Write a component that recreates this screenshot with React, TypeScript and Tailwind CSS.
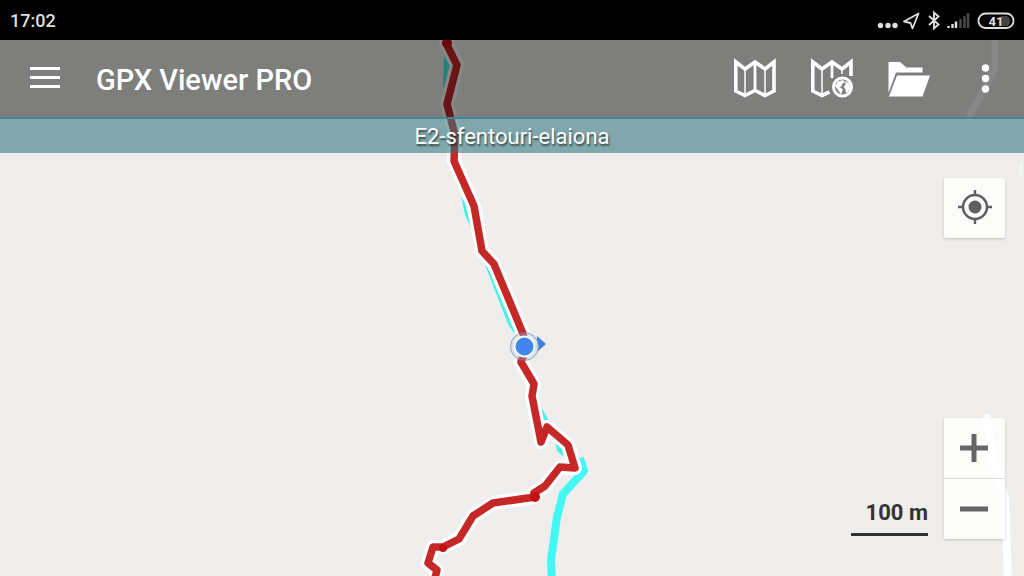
import type { ReactNode } from "react";

interface ToolbarButtonProps {
  label: string;
  children: ReactNode;
}

const TRACK_UPPER =
  "M449 36 L446 43 L457 65 L447 104 L455 135 L454 161 L474 206 L482 251 L494 264 L524 336 L521 362 L534 384 L532 396 L541 442 L547 427 L568 445 L575 468 L560 467 L545 486 L534 493";
const TRACK_LOWER =
  "M535 497 L493 503 L473 516 L459 539 L443 547 L433 547 L428 563 L437 570 L434 582";

function MapCanvas() {
  return (
    <svg
      className="absolute inset-0 h-full w-full"
      viewBox="0 0 1024 576"
      preserveAspectRatio="xMidYMid slice"
      fill="none"
      aria-hidden="true"
    >
      {/* roads */}
      <g stroke="#ffffff" strokeLinejoin="round" strokeLinecap="round">
        <path d="M995 36 V68 L969 117" strokeWidth="7" />
        <path d="M987 418 L992 455 L1005 499 L1008 580" strokeWidth="8" />
        <path d="M1021 164 V176" strokeWidth="1" />
      </g>

      {/* planned route */}
      <path
        d="M444 52 L451 66 L443 90 Z M461 196 L465 203 L471 228 L465 215 Z M484 262 L488 268 L517 331 L514 333 L508 324 Z M540 405 L549 421 L540 420 Z M555 442 L563 450 L563 456 L557 451 Z"
        fill="#43f2ec"
      />
      <path
        d="M580 458 L584 471 L563 494 L557 517 L551 560 L552 580"
        stroke="#43f7f4"
        strokeWidth="8"
        strokeLinejoin="round"
      />

      {/* recorded track */}
      <g stroke="#ffffff" strokeWidth="14" strokeLinejoin="round" strokeLinecap="round">
        <path d={TRACK_UPPER} />
        <path d={TRACK_LOWER} />
      </g>
      <g stroke="#c62828" strokeWidth="7.5" strokeLinejoin="round" strokeLinecap="round">
        <path d={TRACK_UPPER} />
        <path d={TRACK_LOWER} />
      </g>
      <g fill="#c21216">
        <circle cx="535" cy="497" r="5" />
        <circle cx="443" cy="548" r="4" />
        <circle cx="447" cy="43" r="5" />
      </g>

      {/* current position */}
      <path d="M537 336 L546 344 L537 352 Z" fill="#3f80e0" />
      <circle cx="524.5" cy="346.5" r="14" fill="#cfe0ec" fillOpacity="0.8" stroke="#8fa5b8" />
      <path
        d="M522 331 L524 337 M521 361 L524 356"
        stroke="#a83248"
        strokeOpacity="0.7"
        strokeWidth="7"
      />
      <circle cx="524.5" cy="346.5" r="10" fill="#4285ee" stroke="#f4f8fb" strokeWidth="2" />
    </svg>
  );
}

function StatusBar() {
  return (
    <div className="flex h-10 items-center justify-between bg-black pl-2.5 pr-2 pt-0.5 text-[#dedede]">
      <span className="text-lg font-medium">17:02</span>
      <svg className="h-6 w-[140px]" viewBox="0 0 140 24" fill="none" aria-hidden="true">
        <g fill="#dedede">
          <circle cx="4.5" cy="16.5" r="2.7" />
          <circle cx="12" cy="16.5" r="2.7" />
          <circle cx="19" cy="16.5" r="2.7" />
        </g>
        <path d="M42.5 4.5 L28 12.5 L34.5 14 L36.5 19.5 Z" stroke="#dedede" strokeWidth="1.8" strokeLinejoin="round" />
        <path d="M53 7 L62.5 15.5 L58 19.5 V3.5 L62.5 7.5 L53 16" stroke="#dedede" strokeWidth="1.9" />
        <path d="M72.5 19 V17 M76.5 19 V15 M80 19 V12.5" stroke="#dedede" strokeWidth="2.4" />
        <path d="M84.5 19 V10 M88.5 19 V7 M92 19 V4" stroke="#4a4a4a" strokeWidth="2.4" />
        <path d="M125 7 H131 Q134 8 134 12 Q134 16 131 17 H125 Z" fill="#444444" />
        <rect x="102.5" y="4.5" width="35" height="14.5" rx="7" stroke="#dedede" strokeWidth="1.8" />
        <text
          x="120"
          y="16.5"
          textAnchor="middle"
          fill="#dedede"
          className="font-['Roboto',sans-serif] text-[13px] font-bold"
        >
          41
        </text>
      </svg>
    </div>
  );
}

function ToolbarButton({ label, children }: ToolbarButtonProps) {
  return (
    <button type="button" aria-label={label} className="flex h-full w-[77px] items-center justify-center">
      <svg className="h-11 w-11" viewBox="0 0 44 44" fill="none" stroke="#ffffff">
        {children}
      </svg>
    </button>
  );
}

function Toolbar() {
  return (
    <header className="flex h-[77px] items-center bg-black/47 pb-0.5 text-white">
      <button type="button" aria-label="Open menu" className="ml-[30px] flex w-[30px] flex-col gap-1.5">
        <span className="h-[3px] bg-white" />
        <span className="h-[3px] bg-white" />
        <span className="h-[3px] bg-white" />
      </button>
      <h1 className="ml-9 flex-1 pt-1.5 text-[29px] font-medium">GPX Viewer PRO</h1>

      <ToolbarButton label="Select map">
        <path d="M2.8 6 L12 13 L22 6 L32 13 L41 6 V35 L32 39.5 L22 34.5 L12 39.5 L2.8 35 Z" strokeWidth="3.6" />
        <path d="M12 12 V39 M32 12 V39" strokeWidth="1.5" />
        <path d="M22 6 V35" strokeWidth="2.8" />
      </ToolbarButton>

      <ToolbarButton label="Online maps">
        <path d="M41 20 V6 L32 13 L22 6 L12 13 L2.8 6 V35 L12 39.5 L19.5 36" strokeWidth="3.6" />
        <path d="M12 12 V39 M32 12 V18" strokeWidth="1.5" />
        <path d="M22 6 V22" strokeWidth="2.8" />
        <circle cx="32.5" cy="31" r="9" strokeWidth="3" />
        <path
          d="M25 30 L28 25.5 L33 24 L35 26 L31.5 28.5 L32 30 L29.5 31 L33 33.5 L31 38.5 L28.5 34.5 Z M35.5 25 L39.5 28 L40 33 L37 37 L35.5 36 L35.5 33 L33.5 31 L35.5 28.5 Z"
          fill="#ffffff"
          stroke="none"
        />
      </ToolbarButton>

      <ToolbarButton label="Open file">
        <path d="M1.5 6 H13 L19.5 11.5 H35.5 V16.5 H9 L1.5 37 Z" fill="#ffffff" stroke="none" />
        <path d="M10 19.5 H43 L35.5 40.5 H2 Z" fill="#ffffff" stroke="none" />
      </ToolbarButton>

      <ToolbarButton label="More options">
        <g fill="#ffffff" stroke="none">
          <circle cx="21.5" cy="12" r="3.7" />
          <circle cx="21.5" cy="22.5" r="3.7" />
          <circle cx="21.5" cy="33" r="3.7" />
        </g>
      </ToolbarButton>
    </header>
  );
}

function ZoomControls() {
  return (
    <div className="flex w-[61px] flex-col divide-y divide-[#dadad8] rounded-xs bg-white/80 shadow-[0_1px_3px_rgba(0,0,0,0.2)]">
      <button type="button" aria-label="Zoom in" className="flex h-[61px] items-center justify-center pr-0.5">
        <svg className="h-7 w-7" viewBox="0 0 28 28" stroke="#666666" strokeWidth="5">
          <path d="M0 14 H28 M14 0 V28" />
        </svg>
      </button>
      <button type="button" aria-label="Zoom out" className="flex h-[60px] items-center justify-center pr-0.5">
        <svg className="h-7 w-7" viewBox="0 0 28 28" stroke="#666666" strokeWidth="5">
          <path d="M0 14 H28" />
        </svg>
      </button>
    </div>
  );
}

export default function App() {
  return (
    <div className="relative flex min-h-screen flex-col overflow-hidden bg-[#efeeec] font-['Roboto',sans-serif]">
      <MapCanvas />

      <div className="relative flex flex-1 flex-col">
        <StatusBar />
        <Toolbar />
        <h2 className="h-9 border-t-2 border-[#3f8699] bg-[#257078]/55 text-center text-[22px] leading-9 text-white text-shadow-[1px_2px_2px_rgba(0,0,0,0.6)]">
          E2-sfentouri-elaiona
        </h2>

        <main className="flex flex-1 flex-col items-end justify-between pb-[37px] pr-[19px] pt-[25px]">
          <button
            type="button"
            aria-label="Show my location"
            className="flex h-[60px] w-[61px] items-center justify-center rounded-xs bg-white/80 pb-0.5 shadow-[0_1px_3px_rgba(0,0,0,0.2)]"
          >
            <svg className="h-[34px] w-[34px]" viewBox="0 0 34 34" fill="none" stroke="#5f5f5f">
              <circle cx="17" cy="17" r="12" strokeWidth="2.5" />
              <circle cx="17" cy="17" r="6.5" fill="#5f5f5f" stroke="none" />
              <path d="M17 0 V5 M17 29 V34 M0 17 H5 M29 17 H34" strokeWidth="2.5" />
            </svg>
          </button>

          <div className="flex items-end gap-4">
            <div className="flex flex-col items-end gap-1 pb-[3px] text-[#333333]">
              <span className="text-[22px] font-bold leading-8">100 m</span>
              <span className="h-[3px] w-[77px] bg-[#333333]" />
            </div>
            <ZoomControls />
          </div>
        </main>
      </div>
    </div>
  );
}
